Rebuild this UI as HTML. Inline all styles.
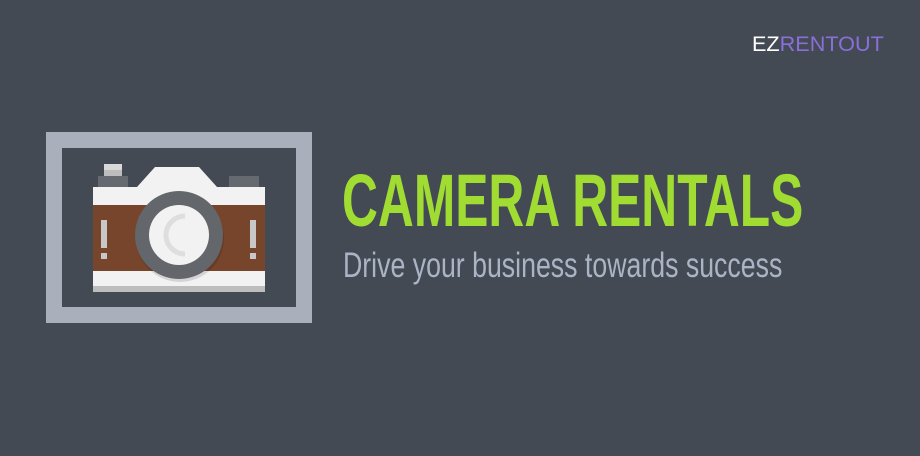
<!DOCTYPE html>
<html><head><style>
body{margin:0;width:920px;height:456px;background:#434a54;overflow:hidden;position:relative;font-family:"Liberation Sans",sans-serif}
.t{position:absolute;white-space:nowrap;transform-origin:0 0}
</style></head><body>
<svg width="920" height="456" style="position:absolute;left:0;top:0">
<rect x="46" y="132" width="266" height="191" fill="#a9b0bb"/>
<rect x="62" y="148" width="234" height="159" fill="#434a54"/>
<rect x="104" y="164" width="18" height="6" fill="#d9d9d9"/>
<rect x="104" y="170" width="18" height="6" fill="#bdbdbd"/>
<rect x="98" y="176" width="30" height="11" fill="#646a70"/>
<rect x="229" y="176" width="30" height="11" fill="#646a70"/>
<polygon points="137,187 155,167 199,167 217,187" fill="#f2f2f2"/>
<rect x="93" y="187" width="172" height="99" fill="#f2f2f2"/>
<rect x="93" y="286" width="172" height="6" fill="#bdbdbd"/>
<rect x="93" y="205" width="172" height="66" fill="#76452c"/>
<circle cx="180" cy="238" r="44" fill="#000" opacity="0.12"/>
<circle cx="179" cy="235" r="44" fill="#63666b"/>
<circle cx="179" cy="235" r="30" fill="#f2f2f2"/>
<path d="M185 216 A19 19 0 0 0 185 254" stroke="#dedede" stroke-width="5" fill="none"/>
<rect x="101" y="220" width="6" height="28" fill="#c8c8c8"/>
<rect x="101" y="253" width="6" height="6" fill="#c8c8c8"/>
<rect x="250" y="220" width="6" height="28" fill="#c8c8c8"/>
<rect x="250" y="253" width="6" height="6" fill="#c8c8c8"/>
</svg>
<div class="t" style="left:342px;top:158px;font-weight:bold;font-size:74px;color:#a0dc32;transform:scaleX(0.672)">CAMERA RENTALS</div>
<div class="t" style="left:343px;top:246px;font-size:35px;color:#aab4c4;transform:scaleX(0.763)">Drive your business towards success</div>
<div class="t" style="left:752px;top:33px;font-size:21px;color:#fff;transform:scaleX(1.03)">EZ<span style="color:#8a6fd8">RENTOUT</span></div>
</body></html>
